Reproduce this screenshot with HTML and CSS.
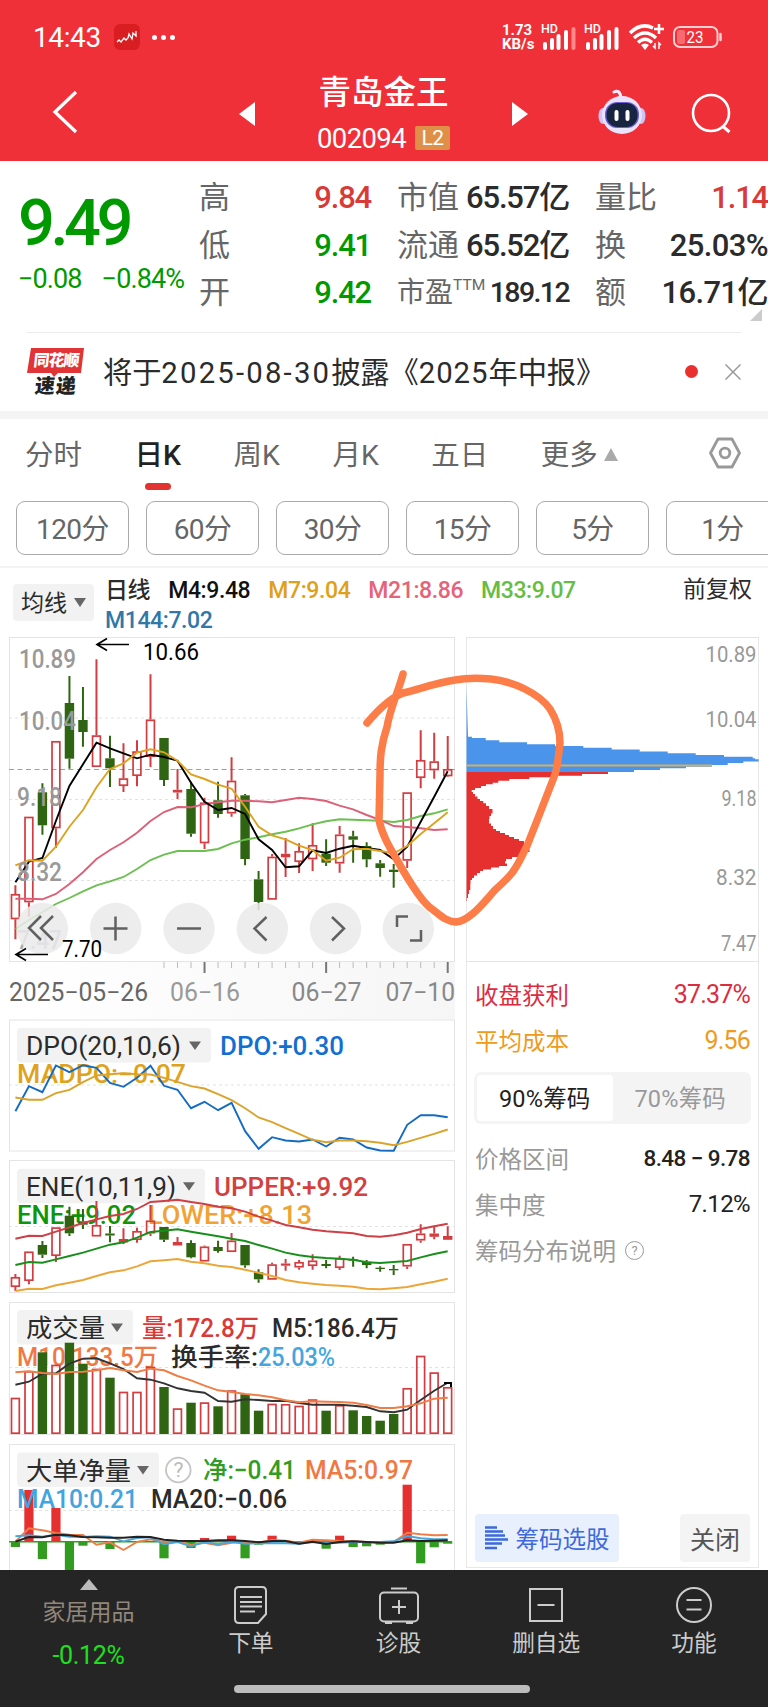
FILE: index.html
```html
<!DOCTYPE html>
<html lang="zh-CN">
<head>
    <meta charset="UTF-8">
    <meta name="viewport" content="width=device-width, initial-scale=1.0">
    <title>青岛金王 002094</title>
    <link rel="stylesheet" href="styles.css">
</head>
<body>
    <header class="top">
        <div class="status-bar">
            <span class="time">14:43</span>
            <svg class="app-icon" width="26" height="26" viewBox="0 0 26 26">
                <rect width="26" height="26" rx="6" fill="#d81e20"/>
                <path d="M3 18l2-2 2 2 3-4 2 2 2-2 1-4 3 5 1-6 3 3V7" fill="none" stroke="#fff" stroke-width="1.300"/>
            </svg>
            <span class="dots"><i></i><i></i><i></i></span>
            <span class="speed"><span>1.73</span><span>KB/s</span></span>
            <svg class="signal" width="36" height="26" viewBox="0 0 36 26">
                <text x="0" y="9" font-size="12" font-weight="500" fill="#fff" textLength="17" lengthAdjust="spacingAndGlyphs">HD</text>
                <path d="M4 20v4M11 16v8M17.500 12v12M25 8v16" stroke="#fff" stroke-width="4" stroke-linecap="round"/>
                <path d="M32.500 5v19" stroke="#f88" stroke-width="4" stroke-linecap="round"/>
            </svg>
            <svg class="signal second" width="36" height="26" viewBox="0 0 36 26">
                <text x="0" y="9" font-size="12" font-weight="500" fill="#fff" textLength="17" lengthAdjust="spacingAndGlyphs">HD</text>
                <path d="M4 20v4M11 16v8M17.500 12v12M25 8v16M32.500 5v19" stroke="#fff" stroke-width="4" stroke-linecap="round"/>
            </svg>
            <svg class="wifi" width="36" height="27" viewBox="0 0 36 27">
                <g fill="none" stroke="#fff" stroke-width="3.500">
                    <path d="M1 9Q12-2 24 4"/>
                    <path d="M5 14Q16 4 27 14"/>
                    <path d="M9 18.500Q16 12 23 18.500"/>
                </g>
                <path d="M12 21q4-3 8 0l-4 5z" fill="#fff"/>
                <path d="M30 0v10M25 5h10" stroke="#fff" stroke-width="2.500"/>
                <path d="M26 19v5l-2-2M30 25v-6l2 2" fill="none" stroke="#fff" stroke-width="1.500"/>
            </svg>
            <svg class="battery" width="50" height="22" viewBox="0 0 50 22">
                <rect x="1" y="1" width="43.500" height="20" rx="6" fill="none" stroke="#fbd0d2" stroke-width="2"/>
                <rect x="4" y="4" width="8" height="14" rx="2" fill="#f66a70"/>
                <path d="M47.500 8v6" stroke="#fbd0d2" stroke-width="2.500" stroke-linecap="round"/>
                <text x="13.500" y="17" font-size="17" fill="#fff" textLength="17" lengthAdjust="spacingAndGlyphs">23</text>
            </svg>
        </div>
        <div class="title-bar">
            <svg class="back" width="26" height="44" viewBox="0 0 26 44"><path d="M24 2L3 22l21 20" fill="none" stroke="#fff" stroke-width="3.300"/></svg>
            <svg class="prev" width="16" height="24" viewBox="0 0 16 24"><path d="M0 12L16 0v24z" fill="#fff"/></svg>
            <div class="stock">
                <h1>青岛金王</h1>
                <div class="code">002094<span class="level">L2</span></div>
            </div>
            <svg class="next" width="16" height="24" viewBox="0 0 16 24"><path d="M16 12L0 0v24z" fill="#fff"/></svg>
            <svg class="robot" width="48" height="46" viewBox="0 0 48 46">
                <path d="M16 3q6-3 7 6" fill="none" stroke="#f4ecfa" stroke-width="3" stroke-linecap="round"/>
                <ellipse cx="5" cy="27" rx="4.500" ry="8" fill="#cdc3f4"/>
                <ellipse cx="43" cy="27" rx="4.500" ry="8" fill="#cdc3f4"/>
                <ellipse cx="24" cy="26" rx="20" ry="19" fill="#e9e4fb"/>
                <rect x="7" y="13" width="34" height="26" rx="12" fill="#6c5ed6"/>
                <rect x="8.500" y="14" width="31" height="24" rx="11" fill="#16243f"/>
                <path d="M18.500 23v7M29.500 23v7" stroke="#fff" stroke-width="4" stroke-linecap="round"/>
            </svg>
            <svg class="search" width="42" height="42" viewBox="0 0 42 42">
                <circle cx="20" cy="20" r="18" fill="none" stroke="#fff" stroke-width="2.600"/>
                <path d="M31.500 33l7 6" stroke="#fff" stroke-width="3"/>
            </svg>
        </div>
    </header>

    <section class="quote">
        <div class="price">
            <div class="last">9.49</div>
            <div class="change"><span>−0.08</span><span>−0.84%</span></div>
        </div>
        <dl class="stats">
            <div><dt>高</dt><dd class="up">9.84</dd></div>
            <div><dt>市值</dt><dd>65.57亿</dd></div>
            <div><dt>量比</dt><dd class="up">1.14</dd></div>
            <div><dt>低</dt><dd class="down">9.41</dd></div>
            <div><dt>流通</dt><dd>65.52亿</dd></div>
            <div class="wide"><dt>换</dt><dd>25.03%</dd></div>
            <div><dt>开</dt><dd class="down">9.42</dd></div>
            <div class="pe"><dt>市盈<sup>TTM</sup></dt><dd>189.12</dd></div>
            <div class="wide"><dt>额</dt><dd>16.71亿</dd></div>
        </dl>
        <i class="corner"></i>
    </section>

    <section class="news">
        <svg class="news-logo" width="60" height="50" viewBox="0 0 60 50">
            <path d="M4 1h53l-3 25H31l-4 4-3-4H0z" fill="#e03436"/>
            <g transform="skewX(-6)" font-weight="900">
                <text x="8" y="19" font-size="16" fill="#fff" textLength="46">同花顺</text>
                <text x="12" y="46" font-size="20" fill="#222" textLength="41">速递</text>
            </g>
        </svg>
        <span class="news-text">将于<span class="date">2025-08-30</span>披露《<span class="year">2025</span>年中报》</span>
        <i class="dot"></i>
        <svg class="close" width="16" height="16" viewBox="0 0 16 16"><path d="M.500.500l15 15M15.500.500l-15 15" stroke="#999" stroke-width="1.500"/></svg>
    </section>

    <nav class="tabs">
        <a>分时</a>
        <a class="active">日K</a>
        <a>周K</a>
        <a>月K</a>
        <a>五日</a>
        <a class="more">更多<i></i></a>
        <svg class="settings" width="32" height="32" viewBox="0 0 32 32">
            <path d="M9 2h14l7.500 14L23 30H9L1.500 16z" fill="none" stroke="#999" stroke-width="2.800" stroke-linejoin="round"/>
            <circle cx="16" cy="16" r="4.800" fill="none" stroke="#999" stroke-width="2.800"/>
        </svg>
    </nav>
    <div class="periods">
        <button>120分</button>
        <button>60分</button>
        <button>30分</button>
        <button>15分</button>
        <button>5分</button>
        <button>1分</button>
    </div>

    <div class="ma-bar">
        <span class="chip">均线<i></i></span>
        <div class="ma-list">
            <b>日线</b>
            <span class="m4">M4:9.48</span>
            <span class="m7">M7:9.04</span>
            <span class="m21">M21:8.86</span>
            <span class="m33">M33:9.07</span>
            <span class="m144">M144:7.02</span>
        </div>
        <span class="adjust">前复权</span>
    </div>

    <main class="charts">
        <div class="left">
            <svg id="kline" width="446" height="325" viewBox="9 637 446 325"></svg>
            <svg id="axis" width="446" height="57" viewBox="9 962 446 57"></svg>
            <svg id="dpo" width="446" height="133" viewBox="9 1018.500 446 133"></svg>
            <svg id="ene" width="446" height="133" viewBox="9 1160 446 133"></svg>
            <svg id="volume" width="446" height="133" viewBox="9 1302 446 133"></svg>
            <svg id="net" width="446" height="127" viewBox="9 1443 446 127"></svg>
        </div>
        <aside class="chips">
            <svg id="dist" width="294" height="325" viewBox="466 637 294 325"></svg>
            <div class="row profit"><span>收盘获利</span><span>37.37%</span></div>
            <div class="row cost"><span>平均成本</span><span>9.56</span></div>
            <div class="switch"><span class="on">90%筹码</span><span>70%筹码</span></div>
            <div class="row range"><span>价格区间</span><b>8.48 − 9.78</b></div>
            <div class="row"><span>集中度</span><em>7.12%</em></div>
            <div class="row"><span class="explain">筹码分布说明<i class="help">?</i></span></div>
            <div class="actions">
                <a class="pick">
                    <svg width="24" height="24" viewBox="0 0 24 24"><path d="M0 1.500h12M0 5.500h18M0 9.500h20M0 13.500h23M0 17.500h17M0 22h12" stroke="#3d69dc" stroke-width="2.400"/></svg>筹码选股
                </a>
                <a class="shut">关闭</a>
            </div>
        </aside>
        <!-- hand-drawn mark over both charts -->
        <svg class="scribble" width="220" height="270" viewBox="350 660 220 270">
            <path d="M403 674C399 690 390 708 387 727C381 745 380 757 380 775L379 820C382 835 390 848 397 860C410 883 424 904 432 909C440 915 445 921 456 922C470 921 484 902 495 890C505 881 508 878 512 873C520 862 522 855 527 846L540 813L554 777C558 768 558 758 560 743C560 732 557 720 550 709C539 693 512 681 491 679C478 678 466 678 455 680C435 683 420 689 403 693C390 698 378 710 367 723" fill="none" stroke="#fd7d49" stroke-width="7.500" stroke-linecap="round" stroke-linejoin="round"/>
        </svg>
    </main>

    <footer class="bottom">
        <div class="sector">
            <i></i>
            <span>家居用品</span>
            <b>-0.12%</b>
        </div>
        <a>
            <svg width="36" height="40" viewBox="0 0 36 40">
                <path d="M6 2h23q4 0 4 4v23l-8 9H6q-4 0-4-4V6q0-4 4-4z"/>
                <path d="M7 12h22M7 17h22M7 21.500h22M7 26.500h15"/>
            </svg>
            下单
        </a>
        <a>
            <svg width="42" height="40" viewBox="0 0 42 40">
                <rect x="2" y="7.500" width="38" height="29" rx="4"/>
                <path d="M13 3.500h16M21 15v14M14 22h14M7 38h7M28 38h7"/>
            </svg>
            诊股
        </a>
        <a>
            <svg width="36" height="40" viewBox="0 0 36 40">
                <rect x="2" y="4" width="32" height="32"/>
                <path d="M9.500 20h17"/>
            </svg>
            删自选
        </a>
        <a>
            <svg width="40" height="40" viewBox="0 0 40 40">
                <circle cx="20" cy="20" r="17"/>
                <path d="M12.500 15h15M12.500 24.500h15"/>
            </svg>
            功能
        </a>
        <div class="home-bar"></div>
    </footer>
    <script src="charts.js"></script>
</body>
</html>
```
FILE: styles.css
```css
* {
    box-sizing: border-box;
}
body {
    margin: 0;
    width: 768px;
    height: 1707px;
    overflow: hidden;
    background: #fff;
    color: #2b2b2b;
    font-family: Roboto, "Noto Sans CJK SC", sans-serif;
}
svg {
    display: block;
    flex: none;
}
i, em {
    font-style: normal;
}
.top {
    height: 161px;
    background: #f03038;
    color: #fff;
}
.status-bar {
    display: flex;
    align-items: center;
    height: 74px;
    padding-left: 33px;
}
.time {
    width: 81px;
    font-size: 28px;
    letter-spacing: -0.4px;
}
.dots {
    display: flex;
    gap: 4px;
    width: 350px;
    padding-left: 12px;
}
.dots i {
    width: 5px;
    height: 5px;
    border-radius: 50%;
    background: #fff;
}
.speed {
    display: flex;
    flex-direction: column;
    width: 51px;
    padding-left: 12px;
    font-size: 15px;
    font-weight: 700;
    line-height: 14px;
    white-space: nowrap;
}
.signal {
    margin-top: -1px;
}
.second {
    margin-left: 7px;
}
.wifi {
    margin-left: 9px;
}
.battery {
    margin-left: 8px;
}
.title-bar {
    display: flex;
    height: 87px;
}
.back {
    margin: 16px 0 0 52px;
}
.prev {
    margin: 28px 0 0 161px;
}
.stock {
    width: 257px;
    text-align: center;
}
.stock h1 {
    margin: -3px 0 0;
    font-size: 32.5px;
    font-weight: 500;
    line-height: 44px;
}
.code {
    display: flex;
    justify-content: center;
    align-items: center;
    height: 26px;
    margin-top: 10px;
    font-size: 27.5px;
    letter-spacing: -0.6px;
}
.level {
    width: 35px;
    height: 24px;
    margin-left: 9px;
    border-radius: 2px;
    background: #e08f48;
    font-size: 21px;
    line-height: 25px;
}
.next {
    margin-top: 28px;
}
.robot {
    margin: 15px 0 0 70px;
}
.search {
    margin: 19px 0 0 45px;
}

.quote {
    position: relative;
    display: flex;
    height: 171px;
    padding-top: 13px;
}
.quote::after {
    content: "";
    position: absolute;
    left: 26px;
    right: 27px;
    bottom: -1px;
    height: 1px;
    background: #ececec;
}
.price {
    width: 200px;
    padding-left: 18px;
    color: #009a00;
    white-space: nowrap;
}
.last {
    height: 78px;
    font-size: 65px;
    font-weight: 500;
    line-height: 98px;
    letter-spacing: -4.5px;
}
.change {
    display: flex;
    gap: 20px;
    margin-top: 10px;
    font-size: 27px;
    line-height: 34px;
    letter-spacing: -0.9px;
}
.stats {
    display: grid;
    grid-template-columns: 172px 172px 173px;
    grid-auto-rows: 47.5px;
    column-gap: 26px;
    margin: 0;
}
.stats div {
    display: flex;
    justify-content: space-between;
    align-items: center;
    line-height: 47px;
    white-space: nowrap;
}
.stats dt {
    font-size: 31px;
    color: #666;
}
.stats dd {
    margin: 0;
    font-size: 31px;
    font-weight: 500;
    letter-spacing: -1.2px;
}
.stats .wide dd {
    letter-spacing: -0.6px;
}
.stats .pe dt {
    display: flex;
    font-size: 28px;
}
.stats .pe dd {
    font-size: 28.5px;
    letter-spacing: -1.6px;
}
sup {
    font-size: 15.5px;
    line-height: 32px;
}
.stats .up {
    color: #d93a38;
}
.stats .down {
    color: #009a00;
}
.corner {
    position: absolute;
    right: 6px;
    bottom: 11px;
    border-left: 12px solid transparent;
    border-bottom: 12px solid #ccc;
}

.news {
    display: flex;
    align-items: center;
    height: 87px;
    padding-left: 27px;
    border-bottom: 8px solid #f4f4f4;
}
.news-text {
    width: 582px;
    padding: 0 0 4px 16px;
    font-size: 29.3px;
    letter-spacing: -0.15px;
    white-space: nowrap;
}
.date {
    letter-spacing: 2.2px;
}
.year {
    letter-spacing: 1px;
}
.dot {
    width: 13px;
    height: 13px;
    margin: 0 27px 0 16px;
    border-radius: 50%;
    background: #e8302f;
}

.tabs {
    display: flex;
    align-items: center;
    gap: 52.5px;
    height: 81px;
    padding: 0 0 15px 25px;
    font-size: 28.5px;
    color: #666;
}
.tabs a {
    position: relative;
}
.tabs .active {
    color: #222;
    font-weight: 500;
}
.tabs .active::after {
    content: "";
    position: absolute;
    left: 10px;
    top: 51px;
    width: 26px;
    height: 7px;
    border-radius: 4px;
    background: #e23232;
}
.more i {
    display: inline-block;
    margin: 0 0 4px 6px;
    border: 7.5px solid transparent;
    border-top: 0;
    border-bottom: 13px solid #aaa;
}
.settings {
    margin: 2px 0 0 39px;
}
.periods {
    display: flex;
    gap: 17px;
    height: 68px;
    padding: 1px 0 0 16px;
    overflow: hidden;
    border-bottom: 2px solid #f3f3f3;
}
.periods button {
    flex: none;
    width: 113px;
    height: 54px;
    padding: 0 0 3px;
    border: 1px solid #aaa;
    border-radius: 9px;
    background: #fff;
    color: #666;
    font: 28px Roboto, "Noto Sans CJK SC", sans-serif;
    letter-spacing: -0.6px;
}

.ma-bar {
    display: flex;
    height: 69px;
    padding-left: 13px;
    font-size: 23px;
}
.chip {
    display: flex;
    align-items: center;
    width: 81px;
    height: 37px;
    margin-top: 16px;
    padding: 0 0 3px 8px;
    border-radius: 4px;
    background: #f2f2f2;
}
.chip i {
    margin: 3px 0 0 7px;
    border: 6px solid transparent;
    border-bottom: 0;
    border-top: 9px solid #666;
}
.ma-list {
    display: flex;
    flex-wrap: wrap;
    align-content: flex-start;
    width: 500px;
    margin-left: 11px;
    padding-top: 8px;
    column-gap: 18px;
    font-weight: 500;
    line-height: 30px;
    letter-spacing: -0.4px;
}
.ma-list b {
    font-weight: 500;
}
.m4 { color: #111; }
.m7 { color: #dfa01a; }
.m21 { color: #e6637a; }
.m33 { color: #66bd45; }
.m144 { color: #2f78a8; }
.adjust {
    margin: 5px 0 0 78px;
    line-height: 34px;
}

.charts {
    position: relative;
    display: flex;
    height: 933px;
}
.left {
    width: 457px;
    padding-left: 9px;
}
#axis {
    background: linear-gradient(90deg, #fff, #f6f6f6);
}
#ene {
    margin-top: 8px;
}
#volume, #net {
    margin-top: 9px;
}
.chips {
    width: 293px;
    height: 931px;
    margin-left: 9px;
    border: 1px solid #e8e8e8;
    border-top: 0;
    font-size: 23.5px;
    color: #999;
}
#dist {
    margin-left: -1px;
    overflow: visible;
}
.row {
    display: flex;
    justify-content: space-between;
    align-items: center;
    height: 46px;
    padding: 0 8px;
}
.profit {
    margin-top: 9px;
    color: #dc2c3e;
}
.cost {
    color: #ef9a1c;
}
.profit span + span, .cost span + span {
    font-size: 25px;
    letter-spacing: -0.8px;
}
.switch {
    display: flex;
    width: 277px;
    height: 52px;
    margin: 9px 0 11px 7px;
    padding: 3px;
    border-radius: 7px;
    background: #f4f4f4;
}
.switch span {
    width: 136px;
    height: 46px;
    line-height: 48px;
    text-align: center;
    letter-spacing: 0.2px;
}
.switch .on {
    border-radius: 4px;
    background: #fff;
    color: #222;
}
.row b, .row em {
    color: #222;
    font-weight: 500;
    font-size: 22.5px;
    letter-spacing: -0.6px;
}
.row em {
    font-weight: 400;
    font-size: 24px;
}
.explain {
    display: flex;
    align-items: center;
}
.help {
    width: 19px;
    height: 19px;
    margin-left: 9px;
    border: 1.5px solid #999;
    border-radius: 50%;
    font-size: 13px;
    line-height: 17px;
    text-align: center;
}
.actions {
    display: flex;
    justify-content: space-between;
    margin: 241px 8px 0 8px;
}
.actions a {
    display: flex;
    justify-content: center;
    align-items: center;
    height: 48px;
    border-radius: 4px;
}
.pick {
    gap: 7px;
    width: 144px;
    background: #e8effd;
    color: #3d69dc;
}
.shut {
    width: 70px;
    background: #f4f4f4;
    color: #555;
    font-size: 25px;
}
.scribble {
    position: absolute;
    left: 350px;
    top: 23px;
}

.bottom {
    position: relative;
    display: flex;
    height: 137px;
    background: #252525;
    color: #ccc;
    font-size: 22.7px;
}
.sector {
    display: flex;
    flex-direction: column;
    align-items: center;
    width: 177px;
    padding-top: 9px;
    color: #93877c;
}
.sector i {
    border: 9px solid transparent;
    border-top: 0;
    border-bottom: 11px solid #bbb;
}
.sector span {
    margin-top: 5px;
    font-size: 23px;
    line-height: 36px;
}
.sector b {
    margin-top: 10px;
    color: #1fe01f;
    font-size: 25px;
    font-weight: 400;
    line-height: 30px;
    letter-spacing: -0.3px;
}
.bottom a {
    display: flex;
    flex-direction: column;
    align-items: center;
    width: 147.700px;
    padding-top: 15px;
    line-height: 37px;
}
.bottom svg {
    fill: none;
    stroke: #ccc;
    stroke-width: 2;
}
.home-bar {
    position: absolute;
    left: 234px;
    bottom: 14px;
    width: 296px;
    height: 8px;
    border-radius: 4px;
    background: #bdbdbd;
}
```
FILE: charts.js
```js
const NS = 'http://www.w3.org/2000/svg';
const RED = '#d33c40', GREEN = '#2f6512';
const X = i => 15.4 + i * 13.51;

function el(svg, name, attrs, text) {
    const node = document.createElementNS(NS, name);
    for (const k in attrs) node.setAttribute(k, attrs[k]);
    if (text) node.textContent = text;
    svg.appendChild(node);
    return node;
}

function frame(svg, top, height, gridY) {
    el(svg, 'rect', { x: 9.5, y: top + 0.5, width: 445, height: height - 1, fill: 'none', stroke: '#e4e4e4' });
    gridY.forEach(y => el(svg, 'path', { d: `M9 ${y}H455`, stroke: '#e2e2e2', 'stroke-dasharray': '3 3' }));
}

function line(svg, ys, color, width = 1.9) {
    el(svg, 'polyline', { points: ys.map((y, i) => `${X(i).toFixed(1)},${y}`).join(' '), fill: 'none', stroke: color, 'stroke-width': width });
}

// w is the drawn width of the string
function label(svg, x, y, w, text, color, size = 25.5, weight = 500) {
    el(svg, 'text', { x, y, textLength: w, lengthAdjust: 'spacingAndGlyphs', fill: color, 'font-size': size, 'font-weight': weight }, text);
}

function chip(svg, y, w, text, textW) {
    el(svg, 'rect', { x: 17, y, width: w, height: 34.5, rx: 4, fill: '#f2f2f2' });
    label(svg, 26, y + 27.3, textW, text, '#2b2b2b', 25.5, 400);
    const tx = 17 + w - 22;
    el(svg, 'path', { d: `M${tx} ${y + 13.5}h12l-6 8.500z`, fill: '#666' });
}

// [color, high, body top, body bottom, low]
function candles(svg, data) {
    data.forEach(([c, hi, top, bot, lo], i) => {
        const x = X(i), color = c === 'r' ? RED : GREEN;
        el(svg, 'path', { d: `M${x} ${hi}V${top}M${x} ${bot}V${lo}`, stroke: color, 'stroke-width': 2 });
        if (c === 'r' && bot - top > 4) {
            el(svg, 'rect', { x: x - 3.9, y: top + 0.8, width: 7.8, height: bot - top - 1.6, fill: 'none', stroke: color, 'stroke-width': 1.7 });
        } else {
            el(svg, 'rect', { x: x - 4.7, y: top, width: 9.4, height: bot - top, fill: color });
        }
    });
}

// k-line
const k = document.getElementById('kline');
frame(k, 637, 325, [718, 799.5, 880.5]);
el(k, 'path', { d: 'M9 769.500H455', stroke: '#b3a06c', 'stroke-dasharray': '5 3.500' });
candles(k, [
    ['r', 885.3, 894, 919.3, 939.3], ['r', 816.7, 816.7, 902.3, 916.7], ['g', 783.3, 792.3, 825.3, 834.7],
    ['r', 741, 741, 828.3, 848], ['g', 676, 703, 758.7, 768.7], ['g', 687, 720, 732, 746.7],
    ['r', 659.3, 735.3, 767, 767], ['g', 735.7, 758.3, 768.3, 787], ['r', 743.3, 778.3, 786, 792],
    ['r', 740.3, 751.3, 776, 786.3], ['r', 674.3, 719.5, 757, 767], ['g', 738, 738, 780, 786],
    ['r', 769, 789.8, 792.5, 799], ['g', 781.7, 789, 833.7, 836.7], ['r', 797.7, 802.5, 843.3, 849],
    ['g', 781.7, 800.3, 814, 817.7], ['r', 757.3, 780.7, 813.5, 816.7], ['g', 794, 795.3, 859, 865.3],
    ['g', 871, 879.3, 902, 910], ['r', 854, 856.7, 899.7, 899.7], ['r', 838, 853.8, 857.3, 877],
    ['r', 843.3, 851, 862, 873], ['r', 823.3, 845, 859.3, 871], ['g', 839.3, 853.7, 862.7, 866],
    ['r', 826, 834.5, 863.5, 872.7], ['g', 830.7, 836.3, 839.7, 862.7], ['g', 842.3, 846, 859.3, 867.3],
    ['g', 860, 863.3, 868, 876.7], ['g', 864, 869.7, 872, 887.7], ['r', 792.3, 792.3, 860.7, 868],
    ['r', 730.3, 760, 778, 788.3], ['r', 732.7, 761.3, 770.3, 778.7], ['r', 736, 769, 776.3, 777]
]);
line(k, [929, 920, 912.3, 904, 898, 891.3, 885.3, 881.3, 877, 869, 860, 854.7, 851, 851, 851, 849, 843.3, 839.7, 837.3, 834.3, 831.7, 828.3, 824.3, 821.3, 819.3, 819.7, 820.3, 820.7, 822, 820, 816, 813.3, 809.3], '#6cbf50');
line(k, [898.7, 898.7, 899.3, 894, 884, 872.3, 859, 850, 842.3, 832.7, 821, 812, 807, 807.3, 804, 802.3, 800.7, 800.7, 801.3, 802.3, 800, 797.7, 799, 801, 805.7, 809.3, 815, 820, 826, 827, 828.3, 830, 829.3], '#dc6078');
line(k, [882.3, 861.7, 858, 821, 786, 764.3, 742.7, 748.3, 753.3, 758.3, 754.7, 757, 760.7, 782.7, 801.7, 810, 808, 814, 839.3, 850, 867.3, 866.3, 850.3, 853, 848.7, 845.7, 848, 850, 859.3, 846.7, 821.7, 796.7, 771.3], '#000');
line(k, [865.3, 860.3, 860.7, 846.7, 826.7, 810, 787.3, 769, 763.3, 752.7, 749.3, 752.3, 760.7, 774.3, 779, 784.7, 788.7, 806.7, 826.7, 835.3, 839.3, 845.7, 850, 860.7, 857.7, 849.3, 848.7, 851, 853.3, 846, 834, 823.3, 812.3], '#dda21e');
label(k, 19, 667.5, 57, '10.89', '#999', 26);
label(k, 19, 730, 57, '10.04', '#999', 26);
label(k, 17, 805.7, 45, '9.18', '#999', 26);
label(k, 17, 880.7, 45, '8.32', '#999', 26);
label(k, 17, 949, 45, '7.47', '#aaa', 26);
label(k, 143, 659.5, 56, '10.66', '#000', 24, 400);
el(k, 'path', { d: 'M129 644.500H97M107 638.500L97 644.500l10 6', fill: 'none', stroke: '#000', 'stroke-width': 1.7 });

// round tool buttons over the lower edge of the k-line
const tools = [
    [42.3, 'M41 916l-12 12 12 12M53 916l-12 12 12 12'],
    [115.7, 'M103.500 928.500h24M115.500 916.500v24'],
    [189, 'M177 928.500h24'],
    [262.3, 'M266.500 917l-12 11.500 12 12'],
    [335.5, 'M332 917l12 11.500-12 12'],
    [408.3, 'M397 927v-10.500h11M421 930v10.500h-11']
];
tools.forEach(([cx, d]) => {
    el(k, 'circle', { cx, cy: 928.5, r: 25.7, fill: '#eaeaea', opacity: 0.86 });
    el(k, 'path', { d, fill: 'none', stroke: '#606060', 'stroke-width': 2.5 });
});
label(k, 62, 957.3, 40, '7.70', '#000', 24, 400);
el(k, 'path', { d: 'M48 954.500H16M26 948.500L16 954.500l10 6', fill: 'none', stroke: '#000', 'stroke-width': 1.7 });

// date axis
const ax = document.getElementById('axis');
for (let i = 11; i < 33; i++) {
    const major = (i - 14) % 9 === 0;
    el(ax, 'path', { d: `M${X(i)} 962v${major ? 11 : 6}`, stroke: major ? '#777' : '#bbb', 'stroke-width': major ? 2 : 1 });
}
label(ax, 9, 1001, 139, '2025−05−26', '#666', 25, 400);
label(ax, 170, 1001, 70, '06−16', '#999', 25, 400);
label(ax, 291.5, 1001, 70, '06−27', '#888', 25, 400);
label(ax, 385.5, 1001, 69.5, '07−10', '#888', 25, 400);

// DPO
const dpo = document.getElementById('dpo');
frame(dpo, 1019, 132, [1084.5]);
chip(dpo, 1027.5, 194, 'DPO(20,10,6)', 155);
label(dpo, 220, 1054.7, 124, 'DPO:+0.30', '#126fd2');
label(dpo, 17, 1082.7, 169, 'MADPO:−0.07', '#dfa21d');
line(dpo, [1110.7, 1085.7, 1091.7, 1065, 1071.7, 1064.7, 1067.3, 1082.3, 1086.3, 1077.3, 1065.3, 1085.3, 1089.3, 1107.7, 1101.3, 1109.7, 1102.3, 1130.7, 1148.3, 1136.7, 1140, 1141, 1139, 1146, 1137.3, 1139, 1147, 1150, 1150.3, 1124.3, 1114.7, 1114.7, 1116.7], '#146bc0');
line(dpo, [1097, 1099.3, 1099.3, 1092.7, 1089.3, 1081.7, 1075, 1073.7, 1072.7, 1073.7, 1074, 1077.3, 1081.3, 1085.7, 1088, 1093.7, 1099.7, 1107.7, 1117, 1121.7, 1127.7, 1133.3, 1139.3, 1141.7, 1140, 1140, 1140.7, 1142.3, 1144.7, 1141.3, 1137.3, 1133.3, 1129], '#dba32a');

// ENE
const ene = document.getElementById('ene');
frame(ene, 1160, 133, [1226.5]);
chip(ene, 1168.7, 188, 'ENE(10,11,9)', 150);
label(ene, 214, 1195.7, 154, 'UPPER:+9.92', '#d24040');
label(ene, 17, 1224, 119, 'ENE:+9.02', '#0d960d');
label(ene, 148, 1224, 164, 'LOWER:+8.13', '#f0a332');
candles(ene, [
    ['r', 1274, 1277, 1287, 1291], ['r', 1251.5, 1251.5, 1281, 1284.3], ['g', 1241, 1245, 1254.7, 1258],
    ['r', 1227.3, 1227.3, 1256, 1262], ['g', 1206.7, 1215.7, 1233.3, 1236], ['g', 1209, 1221.3, 1224.7, 1229],
    ['r', 1201, 1225, 1236.5, 1236.5], ['g', 1226, 1233.5, 1235.5, 1242.3], ['r', 1228.3, 1239, 1242.5, 1244],
    ['r', 1227.7, 1231, 1240, 1242.7], ['r', 1205, 1220.5, 1233.5, 1236], ['g', 1227, 1227, 1239.7, 1242],
    ['r', 1237, 1242, 1245.5, 1245.5], ['g', 1240.3, 1243, 1257.3, 1258.3], ['r', 1245.5, 1246.5, 1261.5, 1261.5],
    ['g', 1240.7, 1247, 1251, 1252.7], ['r', 1233, 1240.5, 1252, 1252], ['g', 1245, 1245, 1265.3, 1267.7],
    ['g', 1269.3, 1272.3, 1279.3, 1282.7], ['r', 1262.7, 1264.3, 1279.7, 1279.7], ['r', 1259, 1263.5, 1265.7, 1270.7],
    ['r', 1260, 1262, 1267.5, 1269.7], ['r', 1254.3, 1260.5, 1266, 1269.7], ['g', 1260, 1264, 1266, 1268.3],
    ['r', 1255.7, 1258, 1268, 1270], ['g', 1256.7, 1259.3, 1260.7, 1266.7], ['g', 1260, 1261.7, 1265, 1268.3],
    ['g', 1266.3, 1267.7, 1269, 1271.7], ['g', 1265, 1269, 1270.3, 1275], ['r', 1244, 1244, 1266.5, 1269],
    ['r', 1224.3, 1233.5, 1240.5, 1242.7], ['r', 1225.7, 1233.5, 1236.8, 1239.3], ['r', 1226.3, 1236, 1239.8, 1239.8]
]);
line(ene, [1238.7, 1235.7, 1236, 1231.7, 1227.3, 1223, 1219.3, 1216, 1214, 1209, 1202, 1201, 1199.7, 1202, 1204, 1206.7, 1208.3, 1211.7, 1216.7, 1220.7, 1225, 1227.3, 1229.7, 1231.3, 1232.3, 1233.3, 1236, 1236.7, 1235.3, 1232.7, 1229, 1226.3, 1223.7], '#cf3f45');
line(ene, [1265, 1262, 1262.7, 1259.3, 1256, 1252.7, 1248.7, 1244.7, 1242.3, 1237.7, 1232, 1230.7, 1229.3, 1231.7, 1234, 1236.3, 1238.7, 1241, 1245, 1248.7, 1252.7, 1255.3, 1257, 1258, 1258.7, 1259.7, 1262.3, 1263, 1262, 1261, 1257.3, 1254, 1251.3], '#178f1b');
line(ene, [1291, 1288.7, 1289, 1285.3, 1282.7, 1280, 1276, 1272.3, 1270.3, 1266.3, 1261.3, 1260.3, 1259, 1261.7, 1263.3, 1265.7, 1267, 1269.7, 1272.7, 1276, 1280, 1282.3, 1283.7, 1285, 1285.7, 1286.7, 1288.7, 1289.3, 1288.3, 1287, 1284.3, 1281.7, 1278.7], '#eba638');

// volume
const vol = document.getElementById('volume');
frame(vol, 1302, 133, [1367.5]);
chip(vol, 1310, 116, '成交量', 79);
label(vol, 142, 1337, 117, '量:172.8万', '#d93a38');
label(vol, 272, 1337, 127, 'M5:186.4万', '#2b2b2b');
label(vol, 17, 1365.5, 141, 'M10:133.5万', '#f07943');
label(vol, 171, 1365.5, 87, '换手率:', '#2b2b2b');
label(vol, 258, 1365.5, 77, '25.03%', '#45a6de');
const volTops = [1397.7, 1371, 1352.3, 1364.7, 1342.7, 1363.7, 1368.7, 1377.7, 1391.7, 1391.7, 1366.7, 1387, 1408.3, 1402.7, 1402.3, 1406.3, 1390.3, 1394.3, 1410.7, 1403.7, 1404, 1405.7, 1399.3, 1410.7, 1405, 1410.3, 1416, 1420.7, 1414, 1388, 1355.7, 1372.3, 1387];
const volColors = 'rrgrggrgrrrgrgrgrggrrrrgrggggrrrr';
candles(vol, volTops.map((y, i) => [volColors[i], y, y, 1434, 1434]));
line(vol, [1384.7, 1381.7, 1373.7, 1373.3, 1363.7, 1358.7, 1358.3, 1363.3, 1369, 1378.3, 1379.7, 1383.3, 1388.3, 1391, 1392.7, 1401, 1401.7, 1399.3, 1400, 1401, 1400.7, 1403, 1404.7, 1404.7, 1404.7, 1405.7, 1407, 1411.3, 1412.3, 1409.7, 1400, 1390.7, 1382.7], '#333');
line(vol, [1372.3, 1371.3, 1373, 1374, 1372, 1371.7, 1370.3, 1368, 1370.3, 1372, 1368.7, 1370.3, 1376, 1380.3, 1385.7, 1390.3, 1392, 1394, 1395.3, 1397.3, 1400.3, 1402.3, 1401.3, 1401.7, 1402, 1402.7, 1405, 1408, 1408, 1406.3, 1403.3, 1398.7, 1397.7], '#ee7d46');
el(vol, 'path', { d: 'M444 1383h7v4', fill: 'none', stroke: '#000', 'stroke-width': 2 });

// net inflow of large orders
const net = document.getElementById('net');
frame(net, 1443, 130, [1509.5]);
chip(net, 1451.5, 142, '大单净量', 105);
el(net, 'circle', { cx: 178.3, cy: 1469, r: 12.3, fill: 'none', stroke: '#c4c4c4', 'stroke-width': 1.8 });
label(net, 173.5, 1476, 10, '?', '#bbb', 20, 400);
label(net, 203, 1478, 93, '净:−0.41', '#319c1f');
label(net, 305, 1478, 108, 'MA5:0.97', '#f07943');
const zero = 1540.7;
const netEnds = { 0: 1546, 1: 1489, 2: 1558, 3: 1507, 4: 1571, 5: 1544.7, 7: 1548, 11: 1557.3, 13: 1547, 14: 1537, 16: 1534.7, 17: 1557.3, 18: 1543.7, 19: 1534.7, 23: 1547.7, 24: 1534.7, 25: 1546, 26: 1545.3, 27: 1543.7, 29: 1483.7, 30: 1562.3, 31: 1546.3, 32: 1542.7 };
for (const i in netEnds) {
    const y = netEnds[i];
    el(net, 'rect', { x: X(+i) - 4.6, y: Math.min(y, zero), width: 9.2, height: Math.abs(y - zero), fill: y < zero ? '#e63030' : '#319c1f' });
}
el(net, 'path', { d: 'M9 1540.700H452', stroke: '#319c1f', 'stroke-width': 1.6 });
label(net, 17, 1507, 121, 'MA10:0.21', '#41a5e1');
label(net, 151, 1507, 136, 'MA20:−0.06', '#2b2b2b');
line(net, [1540.7, 1527.3, 1529.3, 1532, 1533.7, 1534, 1543.7, 1541.3, 1549, 1541, 1538.3, 1541, 1540, 1544, 1541.7, 1544.3, 1541.7, 1541, 1541.7, 1539, 1539.7, 1541.7, 1538.7, 1539.3, 1540, 1540.3, 1541, 1541.7, 1541, 1531.7, 1533.3, 1534.3, 1534], '#ee7d46');
line(net, [1535.3, 1534.3, 1535.7, 1533.7, 1535.7, 1536, 1535.3, 1535.7, 1540.3, 1537, 1536.3, 1543.3, 1541, 1545.3, 1541, 1543.3, 1540.7, 1542.7, 1542.3, 1542, 1542.3, 1542.7, 1541, 1541.7, 1541.7, 1541, 1541, 1541, 1540.3, 1535, 1537.3, 1538.3, 1538.3], '#4ba6da');
line(net, [1540.7, 1536, 1536.3, 1533.7, 1534.3, 1536, 1536.3, 1536.7, 1536.7, 1535.7, 1536, 1538.7, 1539.7, 1540, 1540, 1539.3, 1539.3, 1540, 1541.3, 1540, 1540, 1542.7, 1540.7, 1543, 1541, 1540.3, 1541, 1541.7, 1541.7, 1539.3, 1540, 1539.7, 1539.3], '#222');

// price distribution, [right edge, bottom of the step]
const dist = document.getElementById('dist');
function steps(start, rows, color) {
    let d = `M466.500 ${start}`;
    rows.forEach(([x, y]) => { d += `H${x}V${y}`; });
    el(dist, 'path', { d: d + 'H466.500z', fill: color });
}
el(dist, 'path', { d: 'M466 637.500h293M466 961.500h293', stroke: '#e4e4e4' });
el(dist, 'path', { d: 'M466.500 687l1.500 50h-1.500z', fill: '#4a94ec' });
steps(736.7, [[472, 738], [485.7, 740.3], [499.3, 742.3], [527, 744.3], [555, 746], [583.3, 747.8], [611.7, 749.5], [639.7, 751.5], [667.7, 753.3], [695.7, 755], [724, 756.7], [752.7, 758.3], [755, 759.3], [758.7, 761.5], [743.3, 763], [727.7, 765], [711.7, 766.7], [686, 768.3], [660, 770], [634, 772]], '#4a94ec');
steps(772, [[608, 774], [582, 775.7], [555.7, 777.3], [529.3, 779], [509.3, 780.7], [498.3, 782.7], [492.7, 784.3], [486, 786], [481, 788], [475, 790], [471.7, 792], [473, 794], [475, 796.5], [477.5, 799], [480, 801], [483.3, 803.3], [486, 806], [489, 809], [492.5, 813.5], [491, 816], [489.5, 819], [489, 823.5], [491, 826], [493, 829], [496, 831], [500, 833], [505, 835], [509, 837], [514, 839], [519, 841], [524, 843.5], [526.5, 847], [528, 849.5], [529.5, 852], [525, 854.5], [519, 857], [512, 859], [506, 861.5], [505, 863.5], [507, 866], [499, 867.5], [491, 869.5], [483, 871], [480, 873], [477, 875.5], [474, 878], [472, 880], [470.5, 884], [470.3, 890], [469, 894], [468, 898], [467, 901]], '#e63030');
el(dist, 'path', { d: 'M466.500 765.500H712', stroke: '#d6ae5c', 'stroke-width': 2 });
label(dist, 705.5, 661.5, 51, '10.89', '#999', 21.5, 400);
label(dist, 705.5, 727, 51, '10.04', '#999', 21.5, 400);
label(dist, 721.5, 806, 35, '9.18', '#999', 21.5, 400);
label(dist, 716, 885, 40.5, '8.32', '#999', 21.5, 400);
label(dist, 721, 951, 35.5, '7.47', '#999', 21.5, 400);
```
